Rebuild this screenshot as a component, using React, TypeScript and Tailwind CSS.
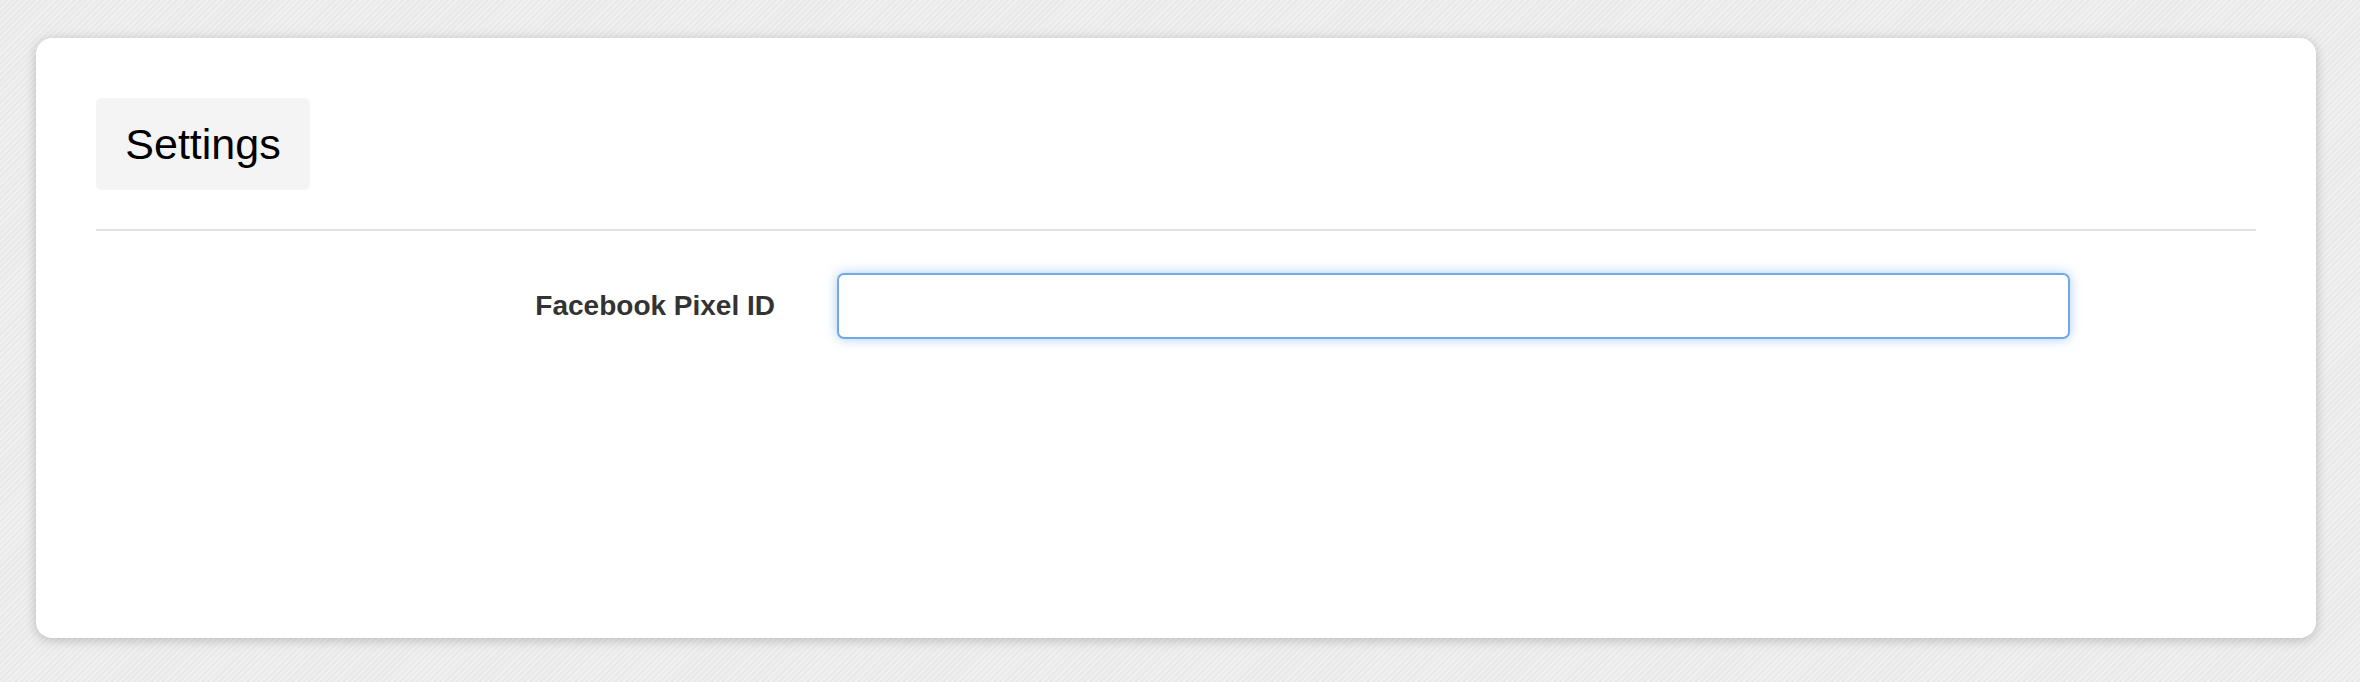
import React from "react";

export default function App() {
  return (
    <div
      className="w-[2360px] h-[682px] overflow-hidden pt-[38px] pl-[36px] bg-[#ebebeb] bg-[repeating-linear-gradient(135deg,#e9e9e9_0px,#e9e9e9_2px,#f0f0f0_2px,#f0f0f0_4px)]"
      style={{ fontFamily: '"Liberation Sans", Arial, sans-serif' }}
    >
      <div className="w-[2280px] h-[600px] bg-white rounded-[16px] shadow-[0_2px_12px_rgba(0,0,0,0.22)] p-[60px]">
        <div className="flex items-center justify-center w-[214px] h-[92px] bg-[#f4f4f4] rounded-[6px] text-[43px] text-black leading-none">
          Settings
        </div>
        <div className="mt-[39px] h-[2px] bg-[#e3e3e3]" />
        <div className="mt-[42px] flex items-center">
          <label className="w-[679px] text-right text-[28px] font-bold text-[#333333] leading-none">
            Facebook Pixel ID
          </label>
          <input
            type="text"
            className="ml-[62px] w-[1233px] h-[66px] border-2 border-[#72a7e8] rounded-[7px] bg-white outline-none shadow-[0_0_12px_rgba(102,165,233,0.55)]"
          />
        </div>
      </div>
    </div>
  );
}
